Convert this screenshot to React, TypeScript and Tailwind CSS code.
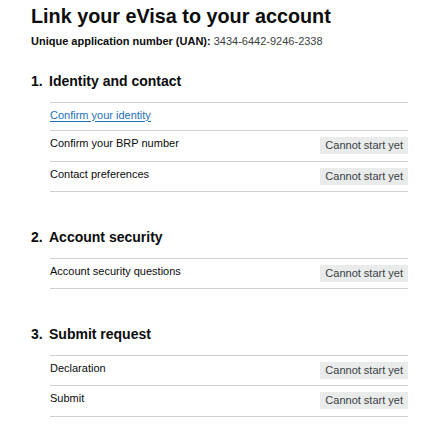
import React from 'react';

type Task = { name: string; href?: boolean; status?: string };

const sections: { title: string; tasks: Task[] }[] = [
  {
    title: 'Identity and contact',
    tasks: [
      { name: 'Confirm your identity', href: true },
      { name: 'Confirm your BRP number', status: 'Cannot start yet' },
      { name: 'Contact preferences', status: 'Cannot start yet' },
    ],
  },
  {
    title: 'Account security',
    tasks: [{ name: 'Account security questions', status: 'Cannot start yet' }],
  },
  {
    title: 'Submit request',
    tasks: [
      { name: 'Declaration', status: 'Cannot start yet' },
      { name: 'Submit', status: 'Cannot start yet' },
    ],
  },
];

export default function App() {
  return (
    <div className="min-h-[429px] w-[447px] bg-white pl-[31px] pr-[39px] pt-[4px] text-[#0b0c0c] font-['Liberation_Sans',Arial,sans-serif]">
      <h1 className="text-[19.8px] font-bold leading-[24px]">Link your eVisa to your account</h1>
      <p className="mt-[5px] text-[11px] leading-[16px]">
        <span className="font-bold">Unique application number (UAN):</span>{' '}
        <span className="text-[#3b3f42]">3434-6442-9246-2338</span>
      </p>

      <ol className="mt-[22px] flex flex-col gap-[35px]">
        {sections.map((section, idx) => (
          <li key={section.title}>
            <h2 className="flex text-[14px] font-bold leading-[20px]">
              <span className="w-[18px] shrink-0">{idx + 1}.</span>
              <span>{section.title}</span>
            </h2>
            <ul className="ml-[19px] mt-[10.5px] border-t border-[#cfd1d2]">
              {section.tasks.map((task) => (
                <li
                  key={task.name}
                  className="flex items-start justify-between border-b border-[#cfd1d2] pt-[6px] pb-[6.5px] text-[11px]"
                >
                  <div className="min-h-[15px] leading-[12px]">
                    {task.href ? (
                      <a href="#" className="text-[#1d70b8] underline underline-offset-[2px] decoration-[1px]">
                        {task.name}
                      </a>
                    ) : (
                      <span>{task.name}</span>
                    )}
                  </div>
                  {task.status && (
                    <span className="h-[17px] bg-[#eaebeb] px-[5px] leading-[17px] text-[#383f43]">{task.status}</span>
                  )}
                </li>
              ))}
            </ul>
          </li>
        ))}
      </ol>
    </div>
  );
}
